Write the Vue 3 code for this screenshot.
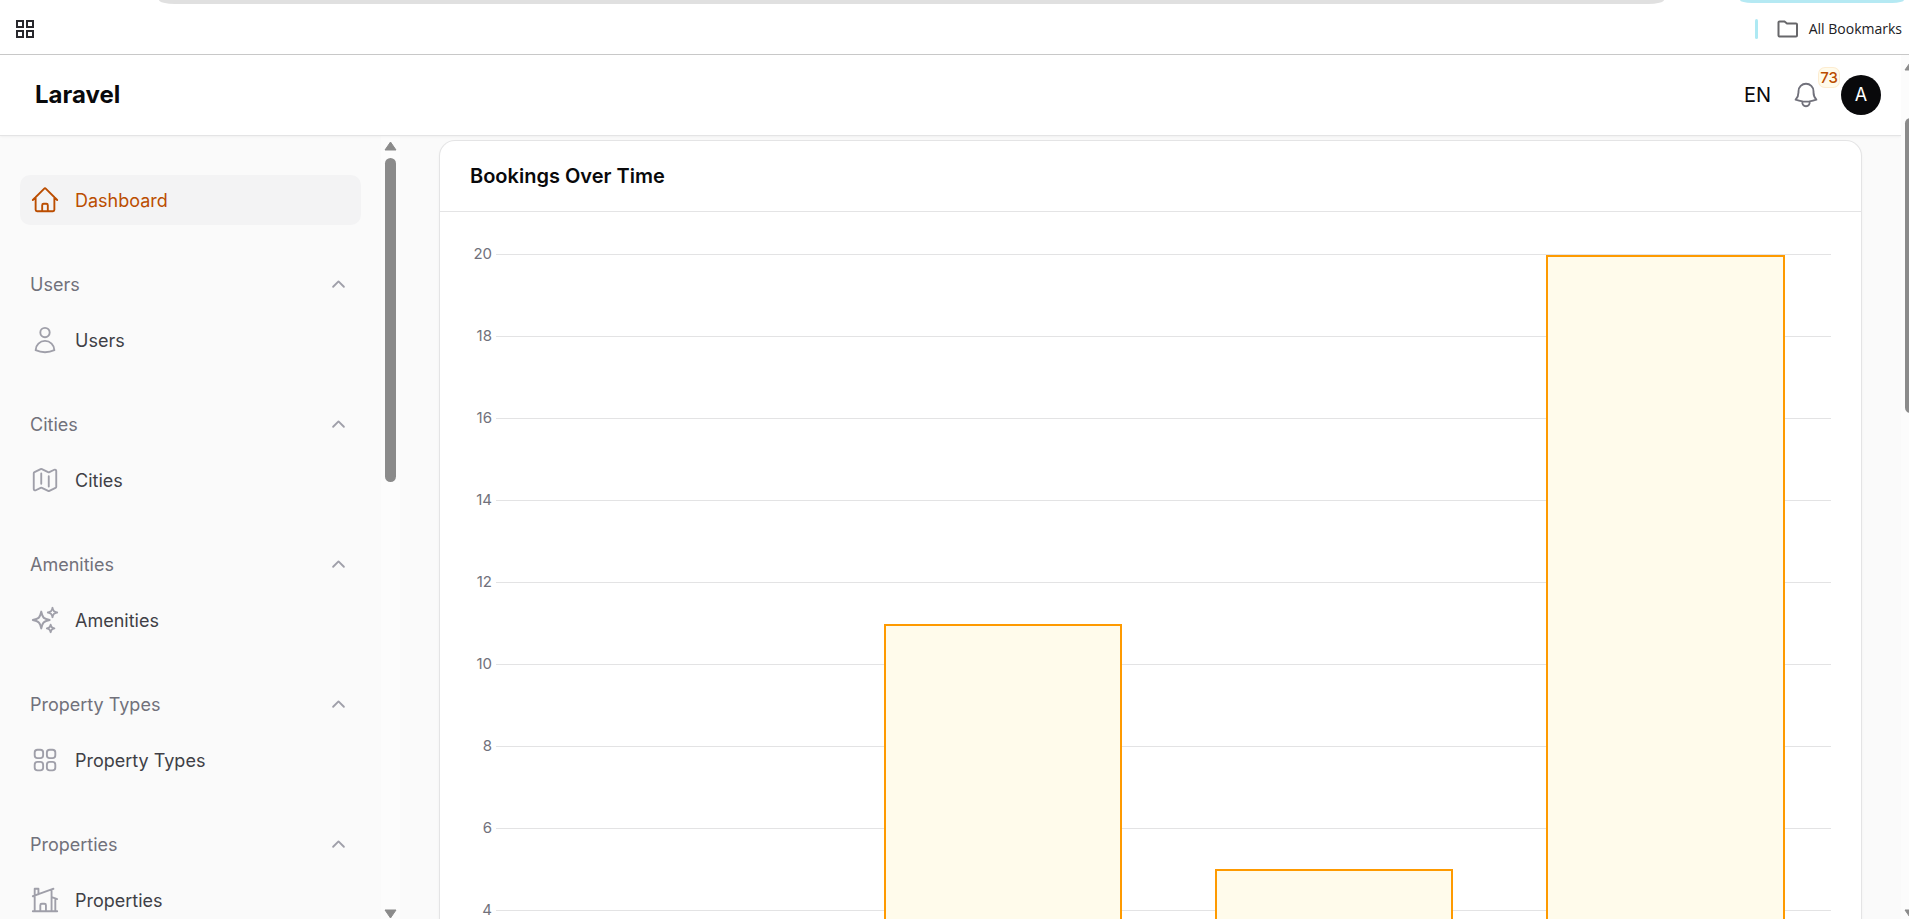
<script setup>
const icons = {
  home: ['m2.25 12 8.954-8.955c.44-.439 1.152-.439 1.591 0L21.75 12M4.5 9.75v10.125c0 .621.504 1.125 1.125 1.125H9.75v-4.875c0-.621.504-1.125 1.125-1.125h2.25c.621 0 1.125.504 1.125 1.125V21h4.125c.621 0 1.125-.504 1.125-1.125V9.75M8.25 21h8.25'],
  user: ['M15.75 6a3.75 3.75 0 1 1-7.5 0 3.75 3.75 0 0 1 7.5 0ZM4.501 20.118a7.5 7.5 0 0 1 14.998 0A17.933 17.933 0 0 1 12 21.75c-2.676 0-5.216-.584-7.499-1.632Z'],
  map: ['M9 6.75V15m6-6v8.25m.503 3.498 4.875-2.437c.381-.19.622-.58.622-1.006V4.82c0-.836-.88-1.38-1.628-1.006l-3.869 1.934c-.317.159-.69.159-1.006 0L9.503 3.252a1.125 1.125 0 0 0-1.006 0L3.622 5.689C3.24 5.88 3 6.27 3 6.695V19.18c0 .836.88 1.38 1.628 1.006l3.869-1.934c.317-.159.69-.159 1.006 0l4.994 2.497c.317.158.69.158 1.006 0Z'],
  sparkles: [
    'M9.813 15.904 9 18.75l-.813-2.846a4.5 4.5 0 0 0-3.09-3.09L2.25 12l2.846-.813a4.5 4.5 0 0 0 3.09-3.09L9 5.25l.813 2.846a4.5 4.5 0 0 0 3.09 3.09L15.75 12l-2.846.813a4.5 4.5 0 0 0-3.09 3.09Z',
    'M18.259 8.715 18 9.75l-.259-1.035a3.375 3.375 0 0 0-2.455-2.456L14.25 6l1.036-.259a3.375 3.375 0 0 0 2.455-2.456L18 2.25l.259 1.035a3.375 3.375 0 0 0 2.456 2.456L21.75 6l-1.035.259a3.375 3.375 0 0 0-2.456 2.456Z',
    'M16.894 20.567 16.5 21.75l-.394-1.183a2.25 2.25 0 0 0-1.423-1.423L13.5 18.75l1.183-.394a2.25 2.25 0 0 0 1.423-1.423l.394-1.183.394 1.183a2.25 2.25 0 0 0 1.423 1.423l1.183.394-1.183.394a2.25 2.25 0 0 0-1.423 1.423Z',
  ],
  squares: ['M3.75 6A2.25 2.25 0 0 1 6 3.75h2.25A2.25 2.25 0 0 1 10.5 6v2.25a2.25 2.25 0 0 1-2.25 2.25H6a2.25 2.25 0 0 1-2.25-2.25V6ZM3.75 15.75A2.25 2.25 0 0 1 6 13.5h2.25a2.25 2.25 0 0 1 2.25 2.25V18a2.25 2.25 0 0 1-2.25 2.25H6A2.25 2.25 0 0 1 3.75 18v-2.25ZM13.5 6a2.25 2.25 0 0 1 2.25-2.25H18A2.25 2.25 0 0 1 20.25 6v2.25A2.25 2.25 0 0 1 18 10.5h-2.25a2.25 2.25 0 0 1-2.25-2.25V6ZM13.5 15.75a2.25 2.25 0 0 1 2.25-2.25H18a2.25 2.25 0 0 1 2.25 2.25V18A2.25 2.25 0 0 1 18 20.25h-2.25A2.25 2.25 0 0 1 13.5 18v-2.25Z'],
  house: ['M8.25 21v-4.875c0-.621.504-1.125 1.125-1.125h2.25c.621 0 1.125.504 1.125 1.125V21m0 0h4.5V3.545M12.75 21h7.5V10.75M2.25 21h1.5m18 0h-18M2.25 9l4.5-1.636M18.75 3l-1.5.545m0 6.205 3 1m1.5.5-1.5-.5M6.75 7.364V3h-3v18m3-13.636 10.5-3.819'],
}

const groups = [
  { label: 'Users', icon: 'user' },
  { label: 'Cities', icon: 'map' },
  { label: 'Amenities', icon: 'sparkles' },
  { label: 'Property Types', icon: 'squares' },
  { label: 'Properties', icon: 'house' },
]

const max = 20
const ticks = [20, 18, 16, 14, 12, 10, 8, 6, 4, 2]
const bookings = [0, 11, 5, 20]
</script>

<template>
  <div class="window">
    <div class="browser-bar">
      <div class="address-edge"></div>
      <div class="profile-edge"></div>
      <button class="plain" aria-label="Apps">
        <svg class="apps" viewBox="0 0 18 18" fill="none" stroke="#28282c" stroke-width="2">
          <path d="M1 1h6v6H1zM11 1h6v6h-6zM1 11h6v6H1zM11 11h6v6h-6z" />
        </svg>
      </button>
      <div class="bookmarks">
        <span class="divider"></span>
        <button class="plain all-bookmarks">
          <svg class="folder" viewBox="0 0 22 18" fill="none" stroke="#67676a" stroke-width="2">
            <path d="M2.5 1.5h5l2.5 2h9a1 1 0 0 1 1 1v11a1 1 0 0 1-1 1h-16.500a1 1 0 0 1-1-1v-13a1 1 0 0 1 1-1Z" />
          </svg>
          All Bookmarks
        </button>
      </div>
    </div>

    <div class="viewport">
      <div class="app">
        <header class="topbar">
          <a class="brand" href="#">Laravel</a>
          <div class="tools">
            <button class="plain lang">EN</button>
            <button class="plain bell" aria-label="Notifications">
              <svg class="icon" viewBox="0 0 24 24">
                <path d="M14.857 17.082a23.848 23.848 0 0 0 5.454-1.31A8.967 8.967 0 0 1 18 9.75V9A6 6 0 0 0 6 9v.75a8.967 8.967 0 0 1-2.312 6.022c1.733.64 3.56 1.085 5.455 1.31m5.714 0a24.255 24.255 0 0 1-5.714 0m5.714 0a3 3 0 1 1-5.714 0" />
              </svg>
              <span class="badge">73</span>
            </button>
            <button class="plain avatar">A</button>
          </div>
        </header>

        <div class="body">
          <aside class="sidebar">
            <nav class="nav">
              <a class="item active" href="#">
                <svg class="icon" viewBox="0 0 24 24"><path v-for="d in icons.home" :key="d" :d="d" /></svg>
                Dashboard
              </a>
              <section v-for="g in groups" :key="g.label" class="group">
                <button class="plain group-label">
                  {{ g.label }}
                  <svg class="chevron" viewBox="0 0 20 20" fill="none"><path d="M5.700 11.800 10 7.500l4.300 4.300" /></svg>
                </button>
                <a class="item" href="#">
                  <svg class="icon" viewBox="0 0 24 24"><path v-for="d in icons[g.icon]" :key="d" :d="d" /></svg>
                  {{ g.label }}
                </a>
              </section>
            </nav>
            <div class="scrollbar side-scroll">
              <svg class="arrow" viewBox="0 0 13 10"><path d="M6.500 1 12 9H1Z" /></svg>
              <div class="thumb"></div>
              <svg class="arrow last" viewBox="0 0 13 10"><path d="M6.500 9 12 1H1Z" /></svg>
            </div>
          </aside>

          <main class="main">
            <section class="card">
              <h2 class="card-title">Bookings Over Time</h2>
              <div class="card-body">
                <div class="chart">
                  <div class="grid">
                    <div v-for="t in ticks" :key="t" class="tick">
                      <span class="tick-label">{{ t }}</span>
                      <span class="tick-line"></span>
                    </div>
                  </div>
                  <div class="bars">
                    <div v-for="(b, i) in bookings" :key="i" class="slot">
                      <div v-if="b" class="bar" :style="{ height: (b / max) * 100 + '%' }"></div>
                    </div>
                  </div>
                </div>
              </div>
            </section>
          </main>
        </div>
      </div>
      <div class="page-scroll">
        <div class="scrollbar">
          <svg class="arrow" viewBox="0 0 13 10"><path d="M6.500 1 12 9H1Z" /></svg>
          <div class="thumb"></div>
          <svg class="arrow last" viewBox="0 0 13 10"><path d="M6.500 9 12 1H1Z" /></svg>
        </div>
      </div>
    </div>
  </div>
</template>

<style>
body {
  margin: 0;
  overflow: hidden;
}
</style>

<style scoped>
* {
  box-sizing: border-box;
}
.window {
  display: flex;
  flex-direction: column;
  height: 100vh;
  overflow: hidden;
  background: #fff;
  color: #09090b;
  font-family: Inter, "Liberation Sans", sans-serif;
}
.plain {
  padding: 0;
  border: 0;
  background: none;
  color: inherit;
  font: inherit;
  cursor: pointer;
}
a {
  color: inherit;
  text-decoration: none;
}
svg {
  display: block;
  flex: none;
}

/* Browser strip */
.browser-bar {
  position: relative;
  display: flex;
  align-items: center;
  justify-content: space-between;
  flex: none;
  height: 55px;
  padding: 4px 7px 0 16px;
  border-bottom: 1px solid #c8c8c8;
}
.address-edge,
.profile-edge {
  position: absolute;
  top: 0;
  height: 4px;
  border-radius: 0 0 16px 16px / 0 0 4px 4px;
}
.address-edge {
  left: 159px;
  right: 245px;
  background: #e0e0e0;
}
.profile-edge {
  right: 5px;
  width: 164px;
  height: 3px;
  background: #b5e9f3;
}
.apps {
  width: 18px;
  height: 18px;
}
.bookmarks,
.all-bookmarks {
  display: flex;
  align-items: center;
}
.bookmarks {
  gap: 19px;
}
.divider {
  width: 3px;
  height: 20px;
  border-radius: 2px;
  background: #aee9f3;
}
.all-bookmarks {
  gap: 10px;
  color: #202024;
  font-family: "Open Sans", "Noto Sans", sans-serif;
  font-size: 14px;
  line-height: 20px;
}
.folder {
  width: 22px;
  height: 18px;
}

/* Page */
.viewport {
  display: flex;
  flex: 1;
  min-height: 0;
}
.app {
  display: flex;
  flex-direction: column;
  flex: 1;
  min-width: 0;
  background: #fafafa;
}
.icon {
  width: 30px;
  height: 30px;
  fill: none;
  stroke: currentColor;
  stroke-width: 1.5;
  stroke-linecap: round;
  stroke-linejoin: round;
}
.topbar {
  position: relative;
  z-index: 1;
  display: flex;
  align-items: center;
  justify-content: space-between;
  flex: none;
  height: 80px;
  padding: 0 20px 0 35px;
  background: #fff;
  box-shadow: 0 0 0 1px #e4e4e5, 0 1px 3px rgba(0, 0, 0, 0.08);
  clip-path: inset(0 0 -4px 0);
}
.brand {
  font-size: 24px;
  line-height: 30px;
  font-weight: 700;
}
.tools {
  display: flex;
  align-items: center;
  gap: 20px;
}
.lang {
  font-size: 20px;
  line-height: 30px;
}
.bell {
  position: relative;
  color: #71717b;
}
.badge {
  position: absolute;
  left: 28px;
  top: -12px;
  min-width: 20px;
  height: 19px;
  border-radius: 6px;
  background: #fffbeb;
  box-shadow: 0 0 0 1px #fdecd0;
  color: #bb4d00;
  font-size: 15px;
  line-height: 19px;
  font-weight: 500;
  text-align: center;
}
.avatar {
  width: 40px;
  height: 40px;
  border-radius: 50%;
  background: #09090b;
  color: #fff;
  font-size: 18px;
  line-height: 40px;
}
.body {
  display: flex;
  flex: 1;
  min-height: 0;
}

/* Sidebar */
.sidebar {
  display: flex;
  flex: none;
  width: 400px;
  overflow: hidden;
}
.nav {
  display: flex;
  flex-direction: column;
  flex: 1;
  gap: 35px;
  padding: 40px 20px;
}
.group {
  display: flex;
  flex-direction: column;
  flex: none;
  gap: 6px;
}
.item,
.group-label {
  display: flex;
  align-items: center;
  flex: none;
  padding: 0 10px;
  border-radius: 10px;
  font-size: 18px;
  line-height: 25px;
  font-weight: 400;
}
.item {
  gap: 15px;
  height: 50px;
  color: #3f3f46;
}
.item .icon {
  color: #9f9fa9;
}
.item.active {
  background: #f3f3f4;
  color: #bb4d00;
}
.item.active .icon {
  color: #bb4d00;
}
.group-label {
  justify-content: space-between;
  height: 49px;
  color: #71717b;
}
.chevron {
  width: 25px;
  height: 25px;
  stroke: #9f9fa9;
  stroke-width: 1.5;
  stroke-linecap: round;
  stroke-linejoin: round;
}

/* Scrollbars */
.scrollbar {
  display: flex;
  flex-direction: column;
  align-items: center;
  flex: none;
  width: 19px;
  background: #fcfcfc;
}
.arrow {
  width: 13px;
  height: 10px;
  fill: #8b8b8b;
  stroke: #8b8b8b;
  stroke-width: 1;
  stroke-linejoin: round;
}
.last {
  margin-top: auto;
}
.thumb {
  width: 11px;
  margin-top: 7px;
  border-radius: 6px;
  background: #8b8b8b;
}
.side-scroll {
  padding-top: 6px;
}
.side-scroll .thumb {
  height: 324px;
}
.page-scroll {
  display: flex;
  flex: none;
  width: 8px;
  overflow: hidden;
}
.page-scroll .scrollbar {
  padding-top: 6px;
}
.page-scroll .thumb {
  height: 295px;
  margin-top: 47px;
}

/* Chart */
.main {
  flex: 1;
  min-width: 0;
  padding: 6px 40px 40px;
  overflow: hidden;
}
.card {
  border-radius: 15px;
  background: #fff;
  box-shadow: 0 0 0 1px #e4e4e5, 0 1px 3px rgba(0, 0, 0, 0.1);
}
.card-title {
  margin: 0;
  padding: 20px 30px;
  border-bottom: 1px solid #e4e4e5;
  font-size: 20px;
  line-height: 30px;
  font-weight: 600;
}
.card-body {
  padding: 42px 30px 30px;
}
.chart {
  display: grid;
  height: 820px;
}
.grid,
.bars {
  grid-area: 1 / 1;
}
.grid {
  display: flex;
  flex-direction: column;
}
.tick {
  display: flex;
  align-items: flex-start;
  flex: 1;
  gap: 4px;
}
.tick-label {
  width: 22px;
  margin-top: -10px;
  color: #71717b;
  font-size: 15px;
  line-height: 20px;
  text-align: right;
}
.tick-line {
  flex: 1;
  height: 1px;
  background: #e3e3e4;
}
.bars {
  display: flex;
  align-items: stretch;
  padding: 1px 0 0 36px;
}
.slot {
  display: flex;
  align-items: flex-end;
  justify-content: center;
  flex: 1;
}
.bar {
  width: 72%;
  border: 2px solid #fe9a00;
  border-bottom: 0;
  background: #fffbeb;
}
</style>
